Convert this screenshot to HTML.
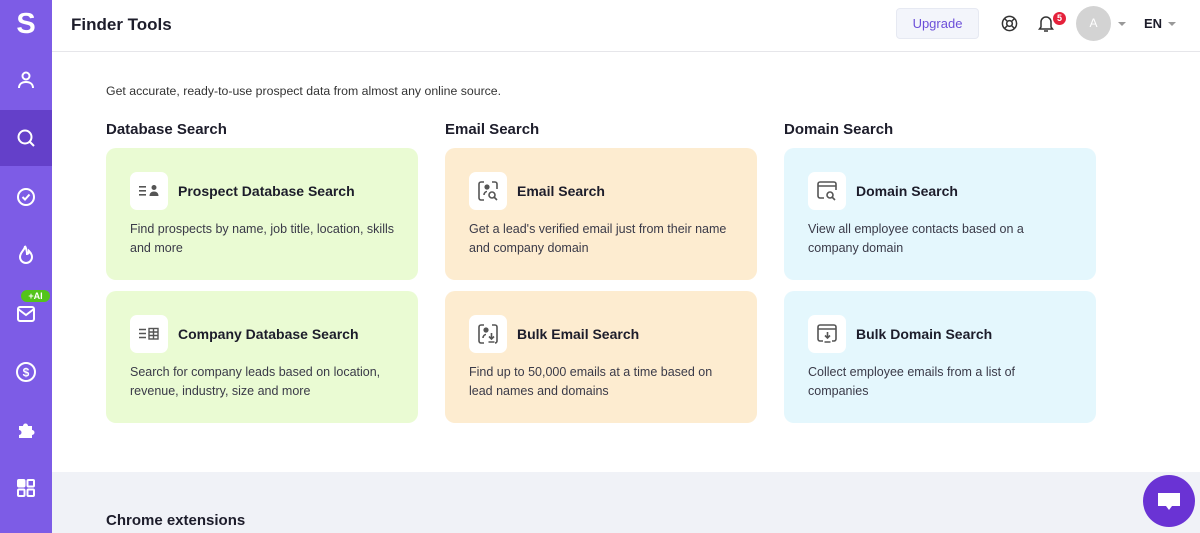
<!DOCTYPE html>
<html><head><meta charset="utf-8"><style>
*{margin:0;padding:0;box-sizing:border-box}
body{width:1200px;height:533px;overflow:hidden;font-family:"Liberation Sans",sans-serif;background:#fff;position:relative;color:#1d1d2b}
.side{position:absolute;left:0;top:0;width:52px;height:533px;background:#7d5ce6}
.side .it{position:absolute;left:0;width:52px;height:56px;display:flex;align-items:center;justify-content:center}
.side .act{background:#6440c9}
.hdr{position:absolute;left:52px;top:0;right:0;height:52px;border-bottom:1px solid #e6e6ea}
.hdr h1{position:absolute;left:19px;top:15px;font-size:17px;font-weight:700;color:#1d1d2b}
.upg{position:absolute;left:844px;top:8px;width:83px;height:31px;background:#f3f5fb;border:1px solid #e6e9f2;border-radius:4px;color:#6c4fd9;font-size:13px;text-align:center;line-height:29px}
.av{position:absolute;left:1024px;top:6px;width:35px;height:35px;border-radius:50%;background:#d3d3d3;color:#fff;font-size:12px;text-align:center;line-height:35px}
.car{position:absolute;width:0;height:0;border-left:4px solid transparent;border-right:4px solid transparent;border-top:4px solid #999}
.intro{position:absolute;left:106px;top:84px;font-size:12.3px;color:#333}
.sec{position:absolute;top:121px;font-size:15px;font-weight:700}
.card{position:absolute;width:312px;height:132px;border-radius:10px}
.g{background:#eafbd3}.o{background:#fdecd0}.b{background:#e4f7fd}
.ic{position:absolute;left:24px;top:24px;width:38px;height:38px;background:#fff;border-radius:7px;display:flex;align-items:center;justify-content:center}
.ct{position:absolute;left:72px;top:35px;font-size:14px;font-weight:700;color:#1d1d2b}
.cd{position:absolute;left:24px;top:72px;width:270px;font-size:12.5px;line-height:19px;color:#3a3a48}
.bot{position:absolute;left:52px;top:472px;right:0;bottom:0;background:#f0f2f7}
.bot h2{position:absolute;left:54px;top:40px;font-size:15px;font-weight:700}
.chat{position:absolute;left:1143px;top:475px;width:52px;height:52px;border-radius:50%;background:#6a33d4;display:flex;align-items:center;justify-content:center}
</style></head><body>
<div class="side">
 <div style="position:absolute;left:0;top:0;width:52px;height:48px;display:flex;align-items:center;justify-content:center;color:#fff;font-size:29px;font-weight:700">S</div>
 <div class="it" style="top:52px"><svg width="20" height="20" viewBox="0 0 20 20" fill="none" stroke="#fff" stroke-width="2"><circle cx="10" cy="6" r="3.5"/><path d="M3 18c0-4 3-6 7-6s7 2 7 6"/></svg></div>
 <div class="it act" style="top:110px"><svg width="20" height="20" viewBox="0 0 20 20" fill="none" stroke="#fff" stroke-width="2"><circle cx="9" cy="9" r="6.5"/><path d="M14 14l4 4"/></svg></div>
 <div class="it" style="top:169px"><svg width="20" height="20" viewBox="0 0 20 20" fill="none" stroke="#fff" stroke-width="2"><circle cx="10" cy="10" r="8"/><path d="M6.5 10l2.5 2.5 4.5-5"/></svg></div>
 <div class="it" style="top:227px"><svg width="20" height="22" viewBox="0 0 20 22" fill="none" stroke="#fff" stroke-width="2"><path d="M9 2c0 4-5 6-5 11a6 6 0 0012 0c0-3-2-5-3-6 0 2-1 3-2 3 0-3-1-6-2-8z"/></svg></div>
 <div style="position:absolute;left:21px;top:290px;width:29px;height:12px;border-radius:6px;background:#53c41a;color:#fff;font-size:9px;font-weight:700;text-align:center;line-height:12px">+AI</div>
 <div class="it" style="top:286px"><svg width="20" height="18" viewBox="0 0 20 18" fill="none" stroke="#fff" stroke-width="2"><rect x="2" y="2" width="16" height="14" rx="2"/><path d="M2 4l8 6 8-6"/></svg></div>
 <div class="it" style="top:344px"><svg width="22" height="22" viewBox="0 0 22 22" fill="none" stroke="#fff" stroke-width="2"><circle cx="11" cy="11" r="9"/><text x="11" y="15.5" font-size="12" fill="#fff" stroke="none" text-anchor="middle" font-family="Liberation Sans" font-weight="700">$</text></svg></div>
 <div class="it" style="top:402px"><svg width="20" height="20" viewBox="0 0 20 20" fill="#fff"><path d="M3 6h4a2.5 2.5 0 015 0h4v4a2.5 2.5 0 010 5v3H3v-3a2.5 2.5 0 000-5z"/></svg></div>
 <div class="it" style="top:460px"><svg width="20" height="20" viewBox="0 0 20 20" fill="none" stroke="#fff" stroke-width="2"><rect x="2" y="2" width="6.5" height="6.5" rx="1" fill="#fff"/><rect x="11.5" y="2" width="6.5" height="6.5" rx="1"/><rect x="2" y="11.5" width="6.5" height="6.5" rx="1"/><rect x="11.5" y="11.5" width="6.5" height="6.5" rx="1"/></svg></div>
</div>
<div class="hdr"><h1>Finder Tools</h1>
 <div class="upg">Upgrade</div>
 <svg style="position:absolute;left:949px;top:15px" width="17" height="17" viewBox="0 0 18 18" fill="none" stroke="#333" stroke-width="1.6"><circle cx="9" cy="9" r="7.5"/><circle cx="9" cy="9" r="3"/><path d="M4 4l3 3M14 4l-3 3M4 14l3-3M14 14l-3-3"/></svg>
 <svg style="position:absolute;left:985px;top:14px" width="18" height="19" viewBox="0 0 18 19" fill="none" stroke="#333" stroke-width="1.5"><path d="M4 13V8a5 5 0 0110 0v5l1.5 2h-13z"/><path d="M7 17h4"/></svg>
 <div style="position:absolute;left:1001px;top:12px;width:13px;height:13px;border-radius:50%;background:#e5213b;color:#fff;font-size:9px;font-weight:700;text-align:center;line-height:13px">5</div>
 <div class="av">A</div>
 <div class="car" style="left:1066px;top:22px"></div>
 <div style="position:absolute;left:1092px;top:16px;font-size:13px;font-weight:700">EN</div>
 <div class="car" style="left:1116px;top:22px"></div>
</div>
<div class="intro">Get accurate, ready-to-use prospect data from almost any online source.</div>
<div class="sec" style="left:106px">Database Search</div>
<div class="sec" style="left:445px">Email Search</div>
<div class="sec" style="left:784px">Domain Search</div>

<div class="card g" style="left:106px;top:148px"><div class="ic"><svg width="22" height="14" viewBox="0 0 22 14" fill="#555"><rect x="1" y="2" width="7" height="1.6"/><rect x="1" y="6" width="7" height="1.6"/><rect x="1" y="10" width="7" height="1.6"/><circle cx="16" cy="3.5" r="2.5"/><path d="M11.5 12c0-3 2-4.5 4.5-4.5s4.5 1.5 4.5 4.5z"/></svg></div><div class="ct">Prospect Database Search</div><div class="cd">Find prospects by name, job title, location, skills and more</div></div>
<div class="card g" style="left:106px;top:291px"><div class="ic"><svg width="22" height="14" viewBox="0 0 22 14" fill="none" stroke="#555" stroke-width="1.4"><path d="M1 2.5h7M1 6.5h7M1 10.5h7"/><rect x="11" y="1.5" width="9" height="10.5"/><path d="M15.5 1.5v10.5M11 5h9M11 8.5h9"/></svg></div><div class="ct">Company Database Search</div><div class="cd">Search for company leads based on location, revenue, industry, size and more</div></div>

<div class="card o" style="left:445px;top:148px"><div class="ic"><svg width="22" height="22" viewBox="0 0 22 22" fill="none" stroke="#555" stroke-width="1.6"><path d="M7 2H4a2 2 0 00-2 2v14a2 2 0 002 2h3M15 2h3a2 2 0 012 2v5"/><circle cx="10" cy="7" r="1.8" fill="#555"/><path d="M7 15c0-2 1.5-3.5 3-3.5" /><circle cx="15" cy="15" r="3"/><path d="M17 17l3 3"/></svg></div><div class="ct">Email Search</div><div class="cd">Get a lead's verified email just from their name and company domain</div></div>
<div class="card o" style="left:445px;top:291px"><div class="ic"><svg width="22" height="22" viewBox="0 0 22 22" fill="none" stroke="#555" stroke-width="1.6"><path d="M7 2H4a2 2 0 00-2 2v14a2 2 0 002 2h3M15 2h3a2 2 0 012 2v14a2 2 0 01-2 2"/><circle cx="9" cy="7" r="1.8" fill="#555"/><path d="M6 15c0-2 1.5-3.5 3-3.5"/><path d="M14.5 10v6M12 13.5l2.5 2.5 2.5-2.5M11.5 19h6"/></svg></div><div class="ct">Bulk Email Search</div><div class="cd">Find up to 50,000 emails at a time based on lead names and domains</div></div>

<div class="card b" style="left:784px;top:148px"><div class="ic"><svg width="22" height="22" viewBox="0 0 22 22" fill="none" stroke="#555" stroke-width="1.6"><path d="M8 18H4a2 2 0 01-2-2V4a2 2 0 012-2h14a2 2 0 012 2v6"/><path d="M2 6h18"/><circle cx="14" cy="15" r="3"/><path d="M16 17l3 3"/></svg></div><div class="ct">Domain Search</div><div class="cd">View all employee contacts based on a company domain</div></div>
<div class="card b" style="left:784px;top:291px"><div class="ic"><svg width="22" height="22" viewBox="0 0 22 22" fill="none" stroke="#555" stroke-width="1.6"><path d="M7 18H4a2 2 0 01-2-2V4a2 2 0 012-2h14a2 2 0 012 2v12a2 2 0 01-2 2h-2"/><path d="M2 6h18"/><path d="M11.5 9v6M9 12.5l2.5 2.5 2.5-2.5M8.5 19h6"/></svg></div><div class="ct">Bulk Domain Search</div><div class="cd">Collect employee emails from a list of companies</div></div>

<div class="bot"><h2>Chrome extensions</h2></div>
<div class="chat"><svg width="26" height="24" viewBox="0 0 26 24" fill="#fff"><path d="M2 4h22v13H16l-3 4-3-4H2z"/></svg></div>
</body></html>
